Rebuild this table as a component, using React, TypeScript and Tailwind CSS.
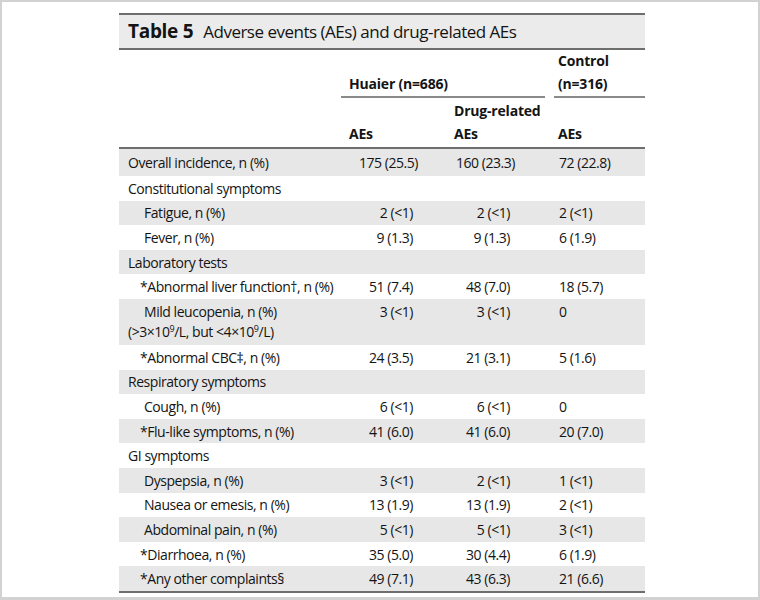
type Row = {
  label: string;
  indent?: "none" | "item" | "star";
  v?: [string, string, string];
  tall?: boolean;
  first?: boolean;
};

const rows: Row[] = [
  { label: "Overall incidence, n (%)", v: ["175 (25.5)", "160 (23.3)", "72 (22.8)"], first: true },
  { label: "Constitutional symptoms" },
  { label: "Fatigue, n (%)", indent: "item", v: ["2 (<1)", "2 (<1)", "2 (<1)"] },
  { label: "Fever, n (%)", indent: "item", v: ["9 (1.3)", "9 (1.3)", "6 (1.9)"] },
  { label: "Laboratory tests" },
  { label: "*Abnormal liver function\u2020, n (%)", indent: "star", v: ["51 (7.4)", "48 (7.0)", "18 (5.7)"] },
  { label: "Mild leucopenia, n (%)", indent: "item", v: ["3 (<1)", "3 (<1)", "0"], tall: true },
  { label: "*Abnormal CBC\u2021, n (%)", indent: "star", v: ["24 (3.5)", "21 (3.1)", "5 (1.6)"] },
  { label: "Respiratory symptoms" },
  { label: "Cough, n (%)", indent: "item", v: ["6 (<1)", "6 (<1)", "0"] },
  { label: "*Flu-like symptoms, n (%)", indent: "star", v: ["41 (6.0)", "41 (6.0)", "20 (7.0)"] },
  { label: "GI symptoms" },
  { label: "Dyspepsia, n (%)", indent: "item", v: ["3 (<1)", "2 (<1)", "1 (<1)"] },
  { label: "Nausea or emesis, n (%)", indent: "item", v: ["13 (1.9)", "13 (1.9)", "2 (<1)"] },
  { label: "Abdominal pain, n (%)", indent: "item", v: ["5 (<1)", "5 (<1)", "3 (<1)"] },
  { label: "*Diarrhoea, n (%)", indent: "star", v: ["35 (5.0)", "30 (4.4)", "6 (1.9)"] },
  { label: "*Any other complaints\u00a7", indent: "star", v: ["49 (7.1)", "43 (6.3)", "21 (6.6)"] },
];

const cols = "grid grid-cols-[222px_105px_99px_100px]";

export default function App() {
  return (
    <div
      className="w-[760px] h-[600px] bg-white border-2 border-b-[3px] border-[#d2d2d2] flex justify-center text-[#141414]"
      style={{ fontFamily: "'Open Sans', 'Liberation Sans', sans-serif" }}
    >
      <div className="w-[526px] mt-[11px] ml-[4px] flex flex-col">
        {/* Title */}
        <div className="h-[37px] bg-[#ebebeb] border-y-2 border-[#6e6e6e] flex items-center gap-[10px] pl-[9px] text-[17px] tracking-[-0.5px]">
          <span className="font-bold text-[19px] tracking-[-0.3px]">Table 5</span>
          <span>Adverse events (AEs) and drug-related AEs</span>
        </div>

        {/* Header */}
        <div className={`${cols} font-bold text-[14px] tracking-[-0.2px] leading-[23px] border-b-2 border-[#6e6e6e]`}>
          <div className="h-[48px]" />
          <div className="col-span-2 h-[48px] flex items-end">
            <div className="w-full border-b-2 border-[#8a8a8a] pl-[8px] pb-[1px]">Huaier (n=686)</div>
          </div>
          <div className="h-[48px] flex items-end pl-[9px]">
            <div className="w-full border-b-2 border-[#8a8a8a] pl-[4px] pb-[1px]">
              Control
              <br />
              (n=316)
            </div>
          </div>

          <div className="h-[49px]" />
          <div className="h-[49px] flex items-end pl-[8px] pb-[2px]">AEs</div>
          <div className="h-[49px] flex items-end pl-[8px] pb-[2px]">
            <div>
              Drug-related
              <br />
              AEs
            </div>
          </div>
          <div className="h-[49px] flex items-end pl-[13px] pb-[2px]">AEs</div>
        </div>

        {/* Body */}
        <div className="border-b-2 border-[#6e6e6e] text-[14px] tracking-[-0.45px]">
          {rows.map((r, i) => {
            const bg = i % 2 === 0 ? "bg-[#e7e7e7]" : "bg-white";
            const h = r.first ? "h-[27px]" : r.tall ? "h-[46px]" : "h-[24.6px]";
            const pad =
              r.indent === "item" ? "pl-[25px]" : r.indent === "star" ? "pl-[21px]" : "pl-[9px]";
            const align = r.tall ? "items-start pt-[3px] leading-[20px]" : "items-center";
            return (
              <div key={i} className={`${cols} ${bg} ${h}`}>
                {r.tall ? (
                  <div className="pt-[3px] leading-[20px] whitespace-nowrap">
                    <div className={pad}>{r.label}</div>
                    <div className="pl-[9px] leading-[20px]">
                      (&gt;3×10<span className="text-[9px] align-[5px] leading-none">9</span>/L, but &lt;4×10
                      <span className="text-[9px] align-[5px] leading-none">9</span>/L)
                    </div>
                  </div>
                ) : (
                  <div className={`${pad} flex items-center whitespace-nowrap`}>{r.label}</div>
                )}
                {r.v && (
                  <>
                    <div className={`flex ${align} justify-end ${r.first ? "pr-[28px]" : "pr-[33px]"}`}>
                      {r.v[0]}
                    </div>
                    <div className={`flex ${align} justify-end ${r.first ? "pr-[30px]" : "pr-[35px]"}`}>
                      {r.v[1]}
                    </div>
                    <div className={`flex ${align} pl-[14px]`}>{r.v[2]}</div>
                  </>
                )}
              </div>
            );
          })}
        </div>
      </div>
    </div>
  );
}
